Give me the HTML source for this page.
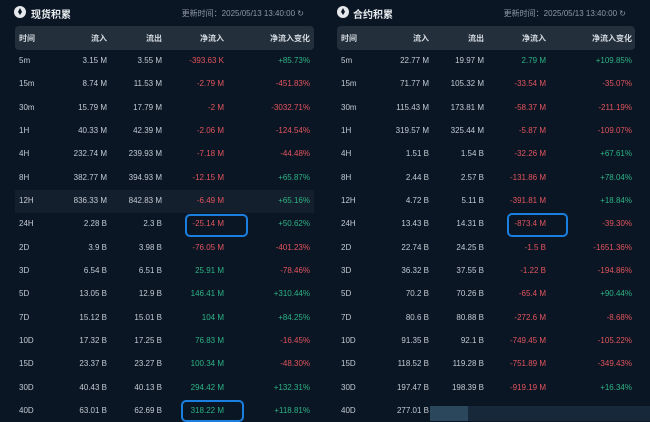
<!DOCTYPE html>
<html><head><meta charset="utf-8"><style>
*{margin:0;padding:0;box-sizing:border-box}
body{width:650px;height:421px;background:#0a1624;overflow:hidden;position:relative;font-family:"Liberation Sans","Noto Sans CJK SC",sans-serif;color:#c3cad2;font-size:8px}
.ab{position:absolute;white-space:nowrap}
.hdr{position:absolute;top:26px;height:24px;background:#232f3b;border-radius:4px}
.r{color:#e2545c}.g{color:#2db384}
.title{font-size:10px;font-weight:bold;color:#e8ecef;top:6px}
.upd{font-size:8px;color:#8e98a2;top:8px}
.ic{position:absolute;width:12px;height:12px;border-radius:50%;background:#e6e9ec;top:6px}
.ic:after{content:"";position:absolute;left:4px;top:2px;width:4px;height:7px;background:#0a1624;clip-path:polygon(50% 0,100% 55%,50% 100%,0 55%)}
.box{position:absolute;border:2px solid #1b7fe0;border-radius:5px}
.th{font-weight:bold;color:#d4dae0}
</style></head><body>
<div class="ic" style="left:14px"></div>
<div class="ab title" style="left:31px">现货积累</div>
<div class="ab upd" style="right:346px">更新时间：2025/05/13 13:40:00 ↻</div>
<div class="ic" style="left:337px"></div>
<div class="ab title" style="left:353px">合约积累</div>
<div class="ab upd" style="right:24px">更新时间：2025/05/13 13:40:00 ↻</div>
<div class="hdr" style="left:15px;width:299px"></div>
<div class="hdr" style="left:337px;width:298px"></div>
<div style="position:absolute;left:15px;top:190px;width:299px;height:23px;background:#141f2d"></div>
<div style="position:absolute;left:430px;top:406px;width:38px;height:15px;background:#2a475b"></div>
<div style="position:absolute;left:468px;top:406px;width:182px;height:15px;background:#17283a"></div>
<div id="t"></div>
<div class="box" style="left:185px;top:214px;width:63px;height:23px"></div>
<div class="box" style="left:181px;top:400px;width:63px;height:22px"></div>
<div class="box" style="left:507px;top:213px;width:61px;height:24px"></div>
<script>
const L=[["5m","3.15 M","3.55 M","-393.63 K","+85.73%"],["15m","8.74 M","11.53 M","-2.79 M","-451.83%"],["30m","15.79 M","17.79 M","-2 M","-3032.71%"],["1H","40.33 M","42.39 M","-2.06 M","-124.54%"],["4H","232.74 M","239.93 M","-7.18 M","-44.48%"],["8H","382.77 M","394.93 M","-12.15 M","+65.87%"],["12H","836.33 M","842.83 M","-6.49 M","+65.16%"],["24H","2.28 B","2.3 B","-25.14 M","+50.62%"],["2D","3.9 B","3.98 B","-76.05 M","-401.23%"],["3D","6.54 B","6.51 B","25.91 M","-78.46%"],["5D","13.05 B","12.9 B","146.41 M","+310.44%"],["7D","15.12 B","15.01 B","104 M","+84.25%"],["10D","17.32 B","17.25 B","76.83 M","-16.45%"],["15D","23.37 B","23.27 B","100.34 M","-48.30%"],["30D","40.43 B","40.13 B","294.42 M","+132.31%"],["40D","63.01 B","62.69 B","318.22 M","+118.81%"]];
const R=[["5m","22.77 M","19.97 M","2.79 M","+109.85%"],["15m","71.77 M","105.32 M","-33.54 M","-35.07%"],["30m","115.43 M","173.81 M","-58.37 M","-211.19%"],["1H","319.57 M","325.44 M","-5.87 M","-109.07%"],["4H","1.51 B","1.54 B","-32.26 M","+67.61%"],["8H","2.44 B","2.57 B","-131.86 M","+78.04%"],["12H","4.72 B","5.11 B","-391.81 M","+18.84%"],["24H","13.43 B","14.31 B","-873.4 M","-39.30%"],["2D","22.74 B","24.25 B","-1.5 B","-1651.36%"],["3D","36.32 B","37.55 B","-1.22 B","-194.86%"],["5D","70.2 B","70.26 B","-65.4 M","+90.44%"],["7D","80.6 B","80.88 B","-272.6 M","-8.68%"],["10D","91.35 B","92.1 B","-749.45 M","-105.22%"],["15D","118.52 B","119.28 B","-751.89 M","-349.43%"],["30D","197.47 B","198.39 B","-919.19 M","+16.34%"],["40D","277.01 B","","",""]];
let h="";
function panel(d,off){
 const xs=[19,107,162,224,310].map((v,i)=>i?v+off:v+off);
 const hd=["时间","流入","流出","净流入","净流入变化"];
 hd.forEach((t,i)=>{h+=i?`<div class="ab th" style="top:33px;right:${650-xs[i]}px">${t}</div>`:`<div class="ab th" style="top:33px;left:${xs[0]}px">${t}</div>`});
 d.forEach((r,k)=>{const y=56+k*23.33;
  r.forEach((t,i)=>{if(!t)return;let c="";if(i>=3)c=t[0]=="-"?"r":"g";
   h+=i?`<div class="ab ${c}" style="top:${y}px;right:${650-xs[i]}px">${t}</div>`:`<div class="ab" style="top:${y}px;left:${xs[0]}px">${t}</div>`});});
}
panel(L,0);panel(R,322);
document.getElementById("t").innerHTML=h;
</script>
</body></html>
